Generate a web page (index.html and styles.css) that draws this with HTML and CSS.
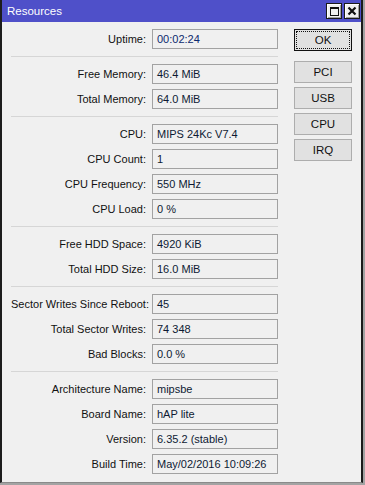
FILE: index.html
```html
<!DOCTYPE html>
<html lang="en">
<head>
    <meta charset="UTF-8">
    <title>Resources</title>
    <link rel="stylesheet" href="styles.css">
</head>
<body>
    <div class="window">
        <div class="titlebar">
            <span class="title">Resources</span>
            <div class="title-buttons">
                <div class="tbtn"><span class="max-icon"></span></div>
                <div class="tbtn">
                    <svg width="10" height="10" viewBox="0 0 10 10">
                        <path d="M1.5 1.5 L8.5 8.5 M8.5 1.5 L1.5 8.5" stroke="#111" stroke-width="2.2"/>
                    </svg>
                </div>
            </div>
        </div>

        <div class="content">
            <div class="props">
                <div class="group">
                    <div class="row"><span class="label">Uptime:</span><span class="value uptime">00:02:24</span></div>
                </div>
                <div class="group">
                    <div class="row"><span class="label">Free Memory:</span><span class="value">46.4 MiB</span></div>
                    <div class="row"><span class="label">Total Memory:</span><span class="value">64.0 MiB</span></div>
                </div>
                <div class="group">
                    <div class="row"><span class="label">CPU:</span><span class="value">MIPS 24Kc V7.4</span></div>
                    <div class="row"><span class="label">CPU Count:</span><span class="value">1</span></div>
                    <div class="row"><span class="label">CPU Frequency:</span><span class="value">550 MHz</span></div>
                    <div class="row"><span class="label">CPU Load:</span><span class="value">0 %</span></div>
                </div>
                <div class="group">
                    <div class="row"><span class="label">Free HDD Space:</span><span class="value">4920 KiB</span></div>
                    <div class="row"><span class="label">Total HDD Size:</span><span class="value">16.0 MiB</span></div>
                </div>
                <div class="group">
                    <div class="row"><span class="label">Sector Writes Since Reboot:</span><span class="value">45</span></div>
                    <div class="row"><span class="label">Total Sector Writes:</span><span class="value">74 348</span></div>
                    <div class="row"><span class="label">Bad Blocks:</span><span class="value">0.0 %</span></div>
                </div>
                <div class="group">
                    <div class="row"><span class="label">Architecture Name:</span><span class="value">mipsbe</span></div>
                    <div class="row"><span class="label">Board Name:</span><span class="value">hAP lite</span></div>
                    <div class="row"><span class="label">Version:</span><span class="value">6.35.2 (stable)</span></div>
                    <div class="row"><span class="label">Build Time:</span><span class="value">May/02/2016 10:09:26</span></div>
                </div>
            </div>

            <div class="actions">
                <button class="btn default">OK</button>
                <div class="btn-list">
                    <button class="btn">PCI</button>
                    <button class="btn">USB</button>
                    <button class="btn">CPU</button>
                    <button class="btn">IRQ</button>
                </div>
            </div>
        </div>
    </div>
</body>
</html>
```

FILE: styles.css
```css
html {
    background: #a3a3a3;
}
body {
    margin: 0;
    font-family: 'Liberation Sans', Arial, sans-serif;
    font-size: 11px;
    color: #111;
}
.window {
    width: 359px;
    height: 482px;
    background: #f0f0f0;
    border-left: 2px solid #1c1c1c;
    border-right: 2px solid #1c1c1c;
    border-bottom: 1px solid #8a8a8a;
    display: flex;
    flex-direction: column;
}
.titlebar {
    height: 22px;
    background: #4f50c9;
    display: flex;
    align-items: center;
    justify-content: space-between;
    padding-left: 5px;
    padding-right: 1px;
}
.title {
    color: #fff;
    font-size: 11.5px;
}
.title-buttons {
    display: flex;
    gap: 2px;
}
.tbtn {
    width: 14px;
    height: 14px;
    background: #f0f0f0;
    border: 1px solid #1a1a1a;
    box-shadow: inset 1px 1px 0 #fff, inset -1px -1px 0 #a0a0a0;
    display: flex;
    align-items: center;
    justify-content: center;
}
.max-icon {
    width: 7px;
    height: 6px;
    border: 1px solid #111;
    border-top-width: 2px;
}
.content {
    display: flex;
    padding: 7px 0 0 9px;
}
.props {
    width: 267px;
}
.group {
    display: flex;
    flex-direction: column;
    gap: 5px;
}
.group + .group {
    margin-top: 7px;
    padding-top: 7px;
    border-top: 1px solid #d6d6d6;
}
.row {
    display: flex;
    align-items: center;
    gap: 6px;
    height: 20px;
}
.label {
    width: 135px;
    text-align: right;
    white-space: nowrap;
}
.value {
    box-sizing: border-box;
    width: 126px;
    height: 20px;
    line-height: 18px;
    border: 1px solid #a2a2a2;
    padding-left: 4px;
    color: #0e1a33;
    white-space: nowrap;
}
.value.uptime {
    color: #0c2a6e;
}
.actions {
    margin-left: 16px;
    display: flex;
    flex-direction: column;
    gap: 10px;
}
.btn-list {
    display: flex;
    flex-direction: column;
    gap: 4px;
}
.btn {
    width: 58px;
    height: 22px;
    font-family: inherit;
    font-size: 11.5px;
    color: #111;
    background: #e1e1e1;
    border: 1px solid #adadad;
    padding: 0;
}
.btn.default {
    border-color: #111;
    outline: 1px dotted #111;
    outline-offset: -3px;
}
```
